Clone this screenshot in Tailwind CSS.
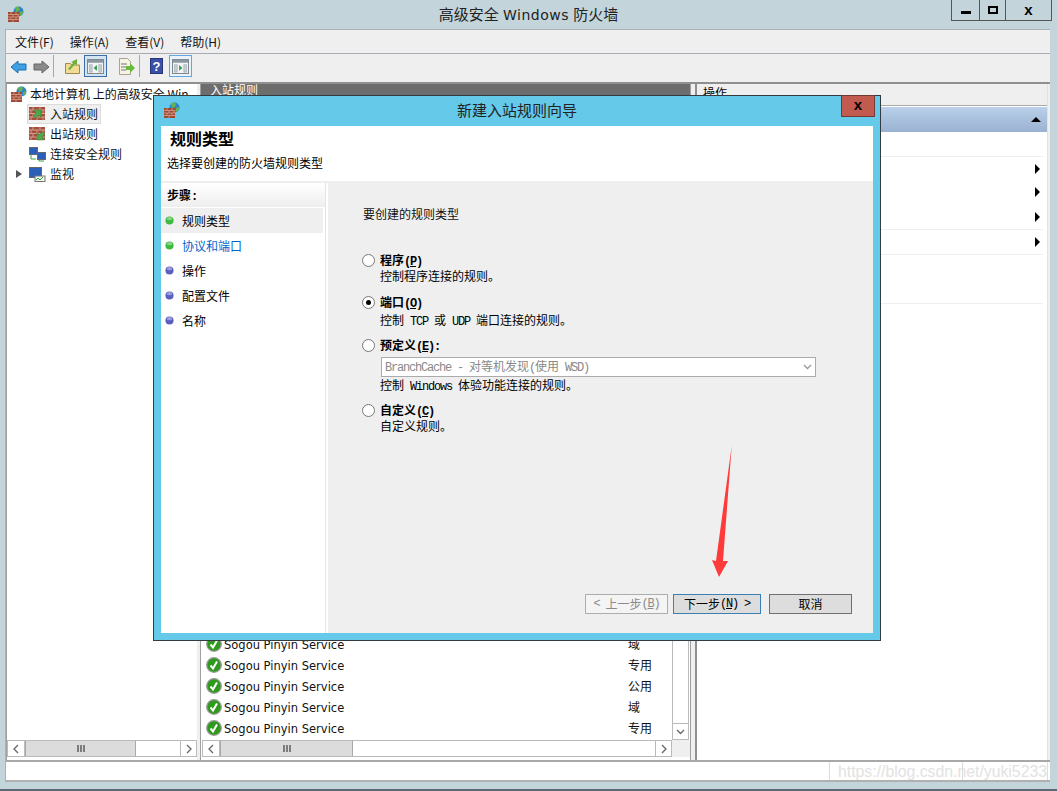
<!DOCTYPE html>
<html lang="zh-CN">
<head>
  <meta charset="UTF-8" />
  <title>高级安全 Windows 防火墙</title>
  <script src="https://cdn.jsdelivr.net/npm/@tailwindcss/browser@4"></script>
</head>
<body class="bg-[#c3d5db] font-['Noto_Sans_CJK_SC',sans-serif] text-[12px] leading-none text-black">
  <svg width="0" height="0" class="absolute">
    <symbol id="wall" viewBox="0 0 16 16">
      <circle cx="10.500" cy="5.500" r="5" fill="#2f7fd0" />
      <path d="M7 2c2-2 4-1 5 0l-1 3-3 1zM12 6l3-1c0 3-1 4-3 5z" fill="#62b548" />
      <rect x="0" y="6" width="11" height="10" fill="#9c4a36" />
      <path d="M0 8.500h11M0 11h11M0 13.500h11M3 6v2.500M8 6v2.500M5 8.500V11M10 8.500V11M3 11v2.500M8 11v2.500M5 13.500V16" stroke="#d9a08c" stroke-width=".8" fill="none" />
    </symbol>
    <symbol id="bricks" viewBox="0 0 16 13">
      <rect x="0" y="0" width="16" height="13" fill="#a4503c" />
      <path d="M0 3h16M0 6.500h16M0 10h16M4 0v3M11 0v3M2 3v3.500M8 3v3.500M14 3v3.500M4 6.500V10M11 6.500V10M2 10v3M8 10v3M14 10v3" stroke="#dcb0a0" stroke-width=".8" fill="none" />
    </symbol>
    <symbol id="pane" viewBox="0 0 18 16">
      <rect x=".5" y=".5" width="17" height="15" fill="#f4f4f4" stroke="#7a8288" />
      <rect x="1" y="1" width="16" height="3" fill="#8b98a2" />
      <path d="M2.500 6h3v8h-3zM12.500 6h3v8h-3z" fill="#c6ced4" stroke="#8b98a2" stroke-width=".5" />
    </symbol>
    <symbol id="ok" viewBox="0 0 16 16">
      <circle cx="8" cy="8" r="7.300" fill="#2e9a1c" stroke="#9a9a9a" stroke-width="1.300" />
      <path d="M4.500 8.500l2.500 3 4-7" fill="none" stroke="#fff" stroke-width="2" />
    </symbol>
    <symbol id="dot" viewBox="0 0 10 10">
      <circle cx="5" cy="5" r="4.500" fill="currentColor" />
      <ellipse cx="5" cy="3" rx="3" ry="1.800" fill="#fff" fill-opacity=".4" />
    </symbol>
    <symbol id="left" viewBox="0 0 8 10"><path d="M6 1L2 5l4 4" fill="none" stroke="#666" stroke-width="1.300" /></symbol>
    <symbol id="right" viewBox="0 0 8 10"><path d="M2 1l4 4-4 4" fill="none" stroke="#666" stroke-width="1.300" /></symbol>
    <symbol id="grip" viewBox="0 0 8 7"><path d="M1 0v7M4 0v7M7 0v7" stroke="#555" stroke-width="1.400" /></symbol>
  </svg>

  <div class="relative w-[1057px] h-[791px] overflow-hidden border-b-2 border-[#5a6670]">
    <!-- Title bar -->
    <div class="relative h-[29px]">
      <svg class="absolute left-[8px] top-[6px] w-[16px] h-[16px]"><use href="#wall" /></svg>
      <div class="pt-[6px] text-center text-[15px] text-[#222]">高级安全 <span class="mx-[1px] font-['DejaVu_Sans',sans-serif] text-[14px] tracking-[0.500px]">Windows</span> 防火墙</div>
      <div class="absolute left-[951px] top-0 flex h-[21px] border-x border-b border-[#555]">
        <div class="flex w-[28px] items-center justify-center border-r border-[#555]"><div class="mt-[5px] h-[3px] w-[10px] bg-black"></div></div>
        <div class="flex w-[26px] items-center justify-center border-r border-[#555]"><div class="h-[8px] w-[10px] border-2 border-black"></div></div>
        <div class="flex w-[45px] items-center justify-center pb-[2px] text-[15px] font-bold font-['Liberation_Sans',sans-serif]">x</div>
      </div>
    </div>

    <!-- Main window -->
    <div class="mx-[5px] h-[753px] w-[1045px] flex flex-col bg-[#efefef] border-t border-l border-[#a9b2b8]">
      <div class="flex h-[24px] items-center gap-[16px] border-b border-[#aaaab2] pl-[9px] text-[#111]">
        <span>文件(F)</span><span>操作(A)</span><span>查看(V)</span><span>帮助(H)</span>
      </div>
      <div class="flex h-[28px] items-start pt-[1px] pl-[4px]">
        <svg class="mt-[4px] h-[16px] w-[17px]" viewBox="0 0 17 16"><path d="M1 8l7-6v3h8v6H8v3z" fill="#3f9fe3" stroke="#1d6fb0" /></svg>
        <svg class="mt-[4px] ml-[6px] h-[16px] w-[17px]" viewBox="0 0 17 16"><path d="M16 8L9 2v3H1v6h8v3z" fill="#8b8b8b" stroke="#666" /></svg>
        <div class="ml-[3px] h-[22px] w-px bg-[#a8a8a8]"></div>
        <svg class="mt-[3px] ml-[11px] h-[16px] w-[15px]" viewBox="0 0 15 16"><path d="M.5 5.500h5l1 1.500h8v8.500H.5z" fill="#f2dc95" stroke="#a08a4a" /><path d="M3 11l5-6-2-1 6-3v6l-2-1-5 6z" fill="#6fb03a" /></svg>
        <div class="ml-[4px] flex h-[22px] w-[23px] items-center justify-center border border-[#3a6ea5] bg-[#d4e4f2]"><svg class="h-[15px] w-[17px]" viewBox="0 0 18 16"><use href="#pane" width="18" height="16" /><path d="M10.500 6.500v6L7 9.500z" fill="#2f9a4a" /></svg></div>
        <svg class="mt-[3px] ml-[11px] h-[17px] w-[17px]" viewBox="0 0 17 17"><path d="M1.500.5h8l3 3v13h-11z" fill="#f6f3e4" stroke="#a9a48c" /><path d="M3 6h6M3 9h5M3 12h5" stroke="#777" /><path d="M8 8h4V5l5 5-5 5v-3H8z" fill="#6bbb3e" /></svg>
        <div class="ml-[4px] h-[22px] w-px bg-[#a8a8a8]"></div>
        <div class="mt-[3px] ml-[10px] flex h-[16px] w-[13px] items-center justify-center bg-[#3b50a8] border border-[#26367a] text-[13px] font-bold text-white font-['Liberation_Sans',sans-serif]">?</div>
        <div class="ml-[6px] flex h-[22px] w-[23px] items-center justify-center border border-[#62a8e0] bg-[#eaf3fa]"><svg class="h-[15px] w-[17px]" viewBox="0 0 18 16"><use href="#pane" width="18" height="16" /><path d="M7.500 6.500v6l3.500-3z" fill="#2f9a4a" /></svg></div>
      </div>

      <div class="flex flex-1 min-h-0 border-t-2 border-[#8f8f8f]">
        <!-- Tree -->
        <div class="flex w-[191px] flex-col bg-white border-l border-[#a0a0a0] pb-[3px]">
          <div class="flex-1 pl-[4px] text-[#111]">
            <div class="flex h-[20px] items-center gap-[3px] whitespace-nowrap"><svg class="h-[16px] w-[16px]"><use href="#wall" /></svg>本地计算机 上的高级安全 Win</div>
            <div class="ml-[16px] flex h-[20px] w-[74px] items-center gap-[4px] border border-[#dcdcdc] bg-[#efefef] pl-[1px]"><svg class="h-[14px] w-[17px]" viewBox="0 0 17 14"><use href="#bricks" width="16" height="13" /><path d="M5 3h7v7l-2-2-3 3-3-2 3-3z" fill="#4fa84a" stroke="#2f7d2f" stroke-width=".5" /></svg>入站规则</div>
            <div class="ml-[17px] flex h-[20px] items-center gap-[4px] pl-[1px]"><svg class="h-[14px] w-[17px]" viewBox="0 0 17 14"><use href="#bricks" width="16" height="13" /><path d="M15 13H8V6l2 2 3-3 3 2-3 3z" fill="#4fa84a" stroke="#2f7d2f" stroke-width=".5" /></svg>出站规则</div>
            <div class="ml-[17px] flex h-[20px] items-center gap-[4px] pl-[1px]"><svg class="h-[15px] w-[17px]" viewBox="0 0 17 15"><rect x=".5" y=".5" width="8" height="7" fill="#2b5fb8" stroke="#667" /><rect x="8.500" y="5.500" width="8" height="7" fill="#2b5fb8" stroke="#667" /><path d="M2 8v4h5M10 13v1h5" stroke="#39a839" fill="none" /></svg>连接安全规则</div>
            <div class="flex h-[20px] items-center gap-[4px]">
              <span class="ml-[5px] h-0 w-0 border-y-[4px] border-l-[6px] border-y-transparent border-l-[#555]"></span>
              <svg class="ml-[3px] h-[15px] w-[17px]" viewBox="0 0 17 15"><rect x=".5" y=".5" width="12" height="10" fill="#2b5fb8" stroke="#666" /><rect x="6" y="9" width="10" height="5.500" fill="#eef6ee" stroke="#777" /><path d="M7 13l2-2 2 2 3-3" stroke="#39a839" fill="none" /></svg>监视
            </div>
          </div>
          <div class="flex h-[17px] border border-[#bbb]">
            <div class="flex w-[17px] items-center justify-center border-r border-[#bbb]"><svg class="h-[10px] w-[8px]"><use href="#left" /></svg></div>
            <div class="flex w-[111px] items-center justify-center border-x border-[#a8a8a8] bg-[#dcdcdc]"><svg class="h-[7px] w-[8px]"><use href="#grip" /></svg></div>
            <div class="flex-1"></div>
            <div class="flex w-[16px] items-center justify-center border-l border-[#bbb]"><svg class="h-[10px] w-[8px]"><use href="#right" /></svg></div>
          </div>
        </div>

        <div class="w-[3px] bg-[#efefef]"></div>

        <!-- Rule list -->
        <div class="flex w-[491px] flex-col bg-white border-x border-[#a0a0a0] pb-[3px]">
          <div class="h-[13px] bg-[#6d6d6d] pl-[9px] text-white">入站规则</div>
          <div class="flex flex-1 min-h-0">
            <div class="flex flex-1 flex-col justify-end pl-[5px] pb-[2px] text-[#111]">
              <div class="flex h-[21px] items-center"><svg class="mr-[2px] h-[16px] w-[16px]"><use href="#ok" /></svg><span class="w-[404px] pt-[4px] font-['DejaVu_Sans',sans-serif] text-[11.500px]">Sogou Pinyin Service</span><span>域</span></div>
              <div class="flex h-[21px] items-center"><svg class="mr-[2px] h-[16px] w-[16px]"><use href="#ok" /></svg><span class="w-[404px] pt-[4px] font-['DejaVu_Sans',sans-serif] text-[11.500px]">Sogou Pinyin Service</span><span>专用</span></div>
              <div class="flex h-[21px] items-center"><svg class="mr-[2px] h-[16px] w-[16px]"><use href="#ok" /></svg><span class="w-[404px] pt-[4px] font-['DejaVu_Sans',sans-serif] text-[11.500px]">Sogou Pinyin Service</span><span>公用</span></div>
              <div class="flex h-[21px] items-center"><svg class="mr-[2px] h-[16px] w-[16px]"><use href="#ok" /></svg><span class="w-[404px] pt-[4px] font-['DejaVu_Sans',sans-serif] text-[11.500px]">Sogou Pinyin Service</span><span>域</span></div>
              <div class="flex h-[21px] items-center"><svg class="mr-[2px] h-[16px] w-[16px]"><use href="#ok" /></svg><span class="w-[404px] pt-[4px] font-['DejaVu_Sans',sans-serif] text-[11.500px]">Sogou Pinyin Service</span><span>专用</span></div>
            </div>
            <div class="flex w-[17px] mr-[1px] flex-col justify-end border-x border-[#bbb]">
              <div class="flex h-[17px] items-center justify-center border-y border-[#bbb]"><svg class="h-[6px] w-[9px]" viewBox="0 0 9 6"><path d="M1 1l3.500 3.500L8 1" stroke="#666" fill="none" stroke-width="1.300" /></svg></div>
            </div>
          </div>
          <div class="flex h-[17px] pl-[1px]">
            <div class="flex h-[17px] w-[470px] border border-[#bbb]">
              <div class="flex w-[17px] items-center justify-center border-r border-[#bbb]"><svg class="h-[10px] w-[8px]"><use href="#left" /></svg></div>
              <div class="flex w-[133px] items-center justify-center border-x border-[#a8a8a8] bg-[#dcdcdc]"><svg class="h-[7px] w-[8px]"><use href="#grip" /></svg></div>
              <div class="flex-1"></div>
              <div class="flex w-[16px] items-center justify-center border-l border-[#bbb]"><svg class="h-[10px] w-[8px]"><use href="#right" /></svg></div>
            </div>
            <div class="flex-1 bg-[#efefef]"></div>
          </div>
        </div>

        <div class="w-[4px] bg-[#efefef]"></div>

        <!-- Actions -->
        <div class="mr-[2px] flex flex-1 flex-col bg-white border-l-2 border-[#8f8f93] border-r border-r-[#e2e2e2]">
          <div class="h-[22px] border-b border-[#aaa] bg-[#efefef] pl-[6px] pt-[3px]">操作</div>
          <div class="mt-[1px] flex h-[25px] items-center justify-end bg-gradient-to-b from-[#bad0ea] to-[#9ab2d1] pr-[6px]"><span class="h-0 w-0 border-x-[5px] border-b-[5px] border-x-transparent border-b-black"></span></div>
          <div class="h-[25px] border-b border-[#efefef] mr-[4px]"></div>
          <div class="flex h-[23px] items-center justify-end pr-[7px]"><span class="h-0 w-0 border-y-[5px] border-l-[5px] border-y-transparent border-l-black"></span></div>
          <div class="flex h-[24px] items-center justify-end pr-[7px]"><span class="h-0 w-0 border-y-[5px] border-l-[5px] border-y-transparent border-l-black"></span></div>
          <div class="flex h-[25px] items-center justify-end pr-[7px]"><span class="h-0 w-0 border-y-[5px] border-l-[5px] border-y-transparent border-l-black"></span></div>
          <div class="mr-[4px] border-t border-[#efefef]"></div>
          <div class="flex h-[24px] items-center justify-end pr-[7px] pb-[1px]"><span class="h-0 w-0 border-y-[5px] border-l-[5px] border-y-transparent border-l-black"></span></div>
          <div class="mr-[4px] h-[50px] border-y border-[#efefef]"></div>
        </div>
      </div>

      <!-- Status bar -->
      <div class="relative h-[22px] border-t-2 border-b-2 border-t-[#a8a8a8] border-b-[#b0b0b0] bg-white">
        <div class="absolute left-[823px] top-0 h-full w-px bg-[#dcdcdc]"></div>
        <div class="absolute left-[956px] top-0 h-full w-px bg-[#dcdcdc]"></div>
        <div class="absolute left-[1041px] top-0 h-full w-px bg-[#dcdcdc]"></div>
        <div class="absolute left-[832px] top-[2px] font-['Liberation_Sans',sans-serif] text-[15.800px] text-[#e2e2e2] whitespace-nowrap">https://blog.csdn.net/yuki5233</div>
      </div>
    </div>

    <!-- Wizard dialog -->
    <div class="absolute left-[153px] top-[95px] flex h-[546px] w-[728px] flex-col border border-[#333a40] bg-[#65c9ea]">
      <div class="relative h-[30px]">
        <svg class="absolute left-[10px] top-[6px] w-[16px] h-[16px]"><use href="#wall" /></svg>
        <div class="pt-[6px] text-center text-[15px] text-[#222]">新建入站规则向导</div>
        <div class="absolute right-[5px] top-[-1px] flex h-[22px] w-[34px] items-center justify-center border border-[#703a36] bg-[#c25a50] pb-[3px] text-[15px] font-bold font-['Liberation_Sans',sans-serif]">x</div>
      </div>
      <div class="mx-[7px] mb-[7px] flex flex-1 min-h-0 flex-col bg-white">
        <div class="h-[57px] border-b-2 border-[#eee] pl-[9px] pt-[4px]">
          <div class="text-[16px] font-bold">规则类型</div>
          <div class="mt-[11px] -ml-[3px] text-[12px]">选择要创建的防火墙规则类型</div>
        </div>
        <div class="flex flex-1 min-h-0">
          <div class="w-[165px] border-r border-[#e4e4e4] pt-[1px]">
            <div class="h-[23px] bg-gradient-to-b from-white to-[#eeeeee] pl-[6px] pt-[5px] font-bold">步骤<span class="font-['Liberation_Mono',monospace] tracking-[-1.200px]">:</span></div>
            <div class="mt-[1px] flex h-[25px] mr-[2px] items-center bg-[#efefef] pl-[4px]"><svg class="mr-[8px] h-[9px] w-[9px] text-[#3fb93f]"><use href="#dot" /></svg>规则类型</div>
            <div class="flex h-[25px] items-center pl-[4px] text-[#0066cc]"><svg class="mr-[8px] h-[9px] w-[9px] text-[#3fb93f]"><use href="#dot" /></svg>协议和端口</div>
            <div class="flex h-[25px] items-center pl-[4px]"><svg class="mr-[8px] h-[9px] w-[9px] text-[#5a5fc0]"><use href="#dot" /></svg>操作</div>
            <div class="flex h-[25px] items-center pl-[4px]"><svg class="mr-[8px] h-[9px] w-[9px] text-[#5a5fc0]"><use href="#dot" /></svg>配置文件</div>
            <div class="flex h-[25px] items-center pl-[4px]"><svg class="mr-[8px] h-[9px] w-[9px] text-[#5a5fc0]"><use href="#dot" /></svg>名称</div>
          </div>
          <div class="ml-[2px] flex flex-1 flex-col bg-[#efefef] pl-[34px] pt-[25px]">
            <div class="ml-[1px] text-[#111]">要创建的规则类型</div>

            <div class="mt-[34px] flex gap-[5px]">
              <span class="h-[13px] w-[13px] rounded-full border border-[#777] bg-white"></span>
              <div><div class="h-[13px] font-bold">程序<span class="font-['Liberation_Mono',monospace] tracking-[-1.200px]">(<u>P</u>)</span></div><div class="mt-[3px]">控制程序连接的规则。</div></div>
            </div>
            <div class="mt-[14px] flex gap-[5px]">
              <span class="flex h-[13px] w-[13px] items-center justify-center rounded-full border border-[#777] bg-white"><span class="h-[5px] w-[5px] rounded-full bg-black"></span></span>
              <div><div class="h-[13px] font-bold">端口<span class="font-['Liberation_Mono',monospace] tracking-[-1.200px]">(<u>O</u>)</span></div><div class="mt-[5px]">控制<span class="font-['Liberation_Mono',monospace] tracking-[-1.200px]"> TCP </span>或<span class="font-['Liberation_Mono',monospace] tracking-[-1.200px]"> UDP </span>端口连接的规则。</div></div>
            </div>
            <div class="mt-[11px] flex gap-[5px]">
              <span class="h-[13px] w-[13px] rounded-full border border-[#777] bg-white"></span>
              <div class="w-[436px]">
                <div class="h-[13px] font-bold">预定义<span class="font-['Liberation_Mono',monospace] tracking-[-1.200px]">(<u>E</u>):</span></div>
                <div class="ml-[1px] mt-[5px] flex h-[20px] items-center justify-between border border-[#ababab] bg-white pl-[3px] pr-[3px] text-[#8a8a8a]"><span>
                  <span class="font-['Liberation_Mono',monospace] tracking-[-1.200px]">BranchCache - </span>对等机发现<span class="font-['Liberation_Mono',monospace] tracking-[-1.200px]">(</span>使用<span class="font-['Liberation_Mono',monospace] tracking-[-1.200px]"> WSD)</span></span><svg class="h-[6px] w-[9px]" viewBox="0 0 9 6"><path d="M1 1l3.500 3.500L8 1" stroke="#999" fill="none" stroke-width="1.300" /></svg></div>
                <div class="mt-[2px]">控制<span class="font-['Liberation_Mono',monospace] tracking-[-1.200px]"> Windows </span>体验功能连接的规则。</div>
              </div>
            </div>
            <div class="mt-[11px] flex gap-[5px]">
              <span class="h-[13px] w-[13px] rounded-full border border-[#777] bg-white"></span>
              <div><div class="h-[13px] font-bold">自定义<span class="font-['Liberation_Mono',monospace] tracking-[-1.200px]">(<u>C</u>)</span></div><div class="mt-[3px]">自定义规则。</div></div>
            </div>

            <div class="mt-auto mb-[19px] ml-[223px] flex">
              <div class="flex h-[20px] w-[83px] items-center justify-center border border-[#adadad] bg-[#f4f4f4] text-[#8a8a8a]"><span class="font-['Liberation_Mono',monospace] tracking-[-1.200px]">&lt;&nbsp;</span>上一步<span class="font-['Liberation_Mono',monospace] tracking-[-1.200px]">(<u>B</u>)</span></div>
              <div class="ml-[5px] flex h-[20px] w-[88px] items-center justify-center border border-[#3c7fb1] bg-[#dddddd]">下一步<span class="font-['Liberation_Mono',monospace] tracking-[-1.200px]">(<u>N</u>)&nbsp;&gt;</span></div>
              <div class="ml-[8px] flex h-[20px] w-[83px] items-center justify-center border border-[#707070] bg-[#dddddd]">取消</div>
            </div>
          </div>
        </div>
      </div>
    </div>

    <!-- Red annotation arrow -->
    <svg class="absolute left-[705px] top-[440px] h-[145px] w-[35px]" viewBox="705 440 35 145">
      <path d="M731.700 446L716 561l-4-1 7 17 9-16-5 0z" fill="#ff3a3a" />
    </svg>
  </div>
</body>
</html>
